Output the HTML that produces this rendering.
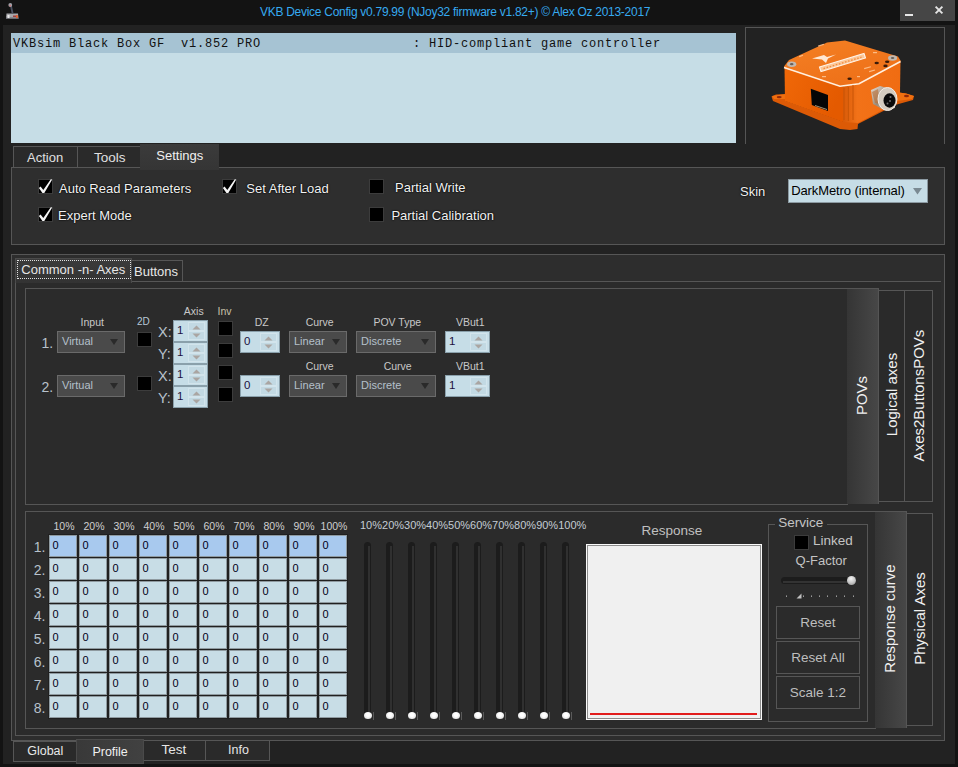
<!DOCTYPE html>
<html><head><meta charset="utf-8">
<style>
*{box-sizing:border-box}
html,body{margin:0;padding:0}
body{width:958px;height:767px;background:#131313;position:relative;overflow:hidden;font-family:"Liberation Sans",sans-serif;color:#e6e6e6}
.a{position:absolute}
.t{position:absolute;white-space:pre;line-height:1}
</style></head><body>

<div class="a" style="left:0px;top:0px;width:958px;height:25px;background:#131313"></div>
<div class="t" style="left:260.00px;top:5.64px;font-size:12px;color:#36aaf0;letter-spacing:-0.28px;">VKB Device Config v0.79.99 (NJoy32 firmware v1.82+) © Alex Oz 2013-2017</div>
<div class="a" style="left:900px;top:0px;width:55px;height:21px;background:#464646"></div>
<div class="a" style="left:905px;top:14px;width:8px;height:2px;background:#e8e8e8"></div>
<svg class="a" style="left:933px;top:4px" width="12" height="12" viewBox="0 0 12 12"><path d="M2.6 2.6L9.4 9.4M9.4 2.6L2.6 9.4" stroke="#e4e4e4" stroke-width="1.9"/></svg>
<svg class="a" style="left:4px;top:2px" width="17" height="18" viewBox="0 0 17 18">
<path d="M2.5 11.5 L14 11.5 L14.5 16.5 L2 16.5 Z" fill="#a8a8ac"/><rect x="2" y="15.5" width="12.5" height="1.5" fill="#6a6a70"/>
<rect x="3.5" y="13" width="2" height="3" fill="#e8e8e8"/>
<rect x="9" y="13.5" width="3" height="1.5" fill="#a04040"/>
<rect x="12" y="13" width="1.8" height="3" fill="#e06030"/>
<path d="M6.8 3 L8.6 11.5" stroke="#4a5060" stroke-width="1.8"/>
<circle cx="6.3" cy="3" r="1.9" fill="#a0a0a8"/>
<circle cx="6.2" cy="3.8" r="0.8" fill="#e07070"/>
</svg>
<div class="a" style="left:3px;top:25px;width:952px;height:739px;background:#222222"></div>
<div class="a" style="left:11px;top:33px;width:725px;height:110px;background:#c6dde6"></div>
<div class="a" style="left:11px;top:33px;width:725px;height:20px;background:#a6c3d3"></div>
<div class="t" style="left:13.00px;top:37.70px;font-size:12px;color:#111;font-family:'Liberation Mono',monospace;letter-spacing:0.8px;">VKBsim Black Box GF  v1.852 PRO                   : HID-compliant game controller</div>
<div class="a" style="left:745px;top:27px;width:200px;height:117px;border:1px solid #555;border-bottom:none"></div>
<svg class="a" style="left:765px;top:35px;filter:blur(0.35px)" width="160" height="100" viewBox="765 35 160 100">
<defs>
<linearGradient id="gtop" x1="0" y1="0" x2="0.6" y2="1"><stop offset="0" stop-color="#f48024"/><stop offset="1" stop-color="#ee7018"/></linearGradient>
<linearGradient id="gleft" x1="0" y1="0" x2="1" y2="0.4"><stop offset="0" stop-color="#f06808"/><stop offset="1" stop-color="#e45a00"/></linearGradient>
<linearGradient id="gright" x1="0" y1="0" x2="1" y2="0"><stop offset="0" stop-color="#d85a08"/><stop offset="0.25" stop-color="#f27218"/><stop offset="1" stop-color="#f06c12"/></linearGradient>
<linearGradient id="gcyl" x1="0" y1="0" x2="1" y2="1"><stop offset="0" stop-color="#e8e0d8"/><stop offset="0.5" stop-color="#9a8a78"/><stop offset="1" stop-color="#d8d0c8"/></linearGradient>
</defs>
<path d="M771.5 96.5 L776 94.5 L786 94 L786 101 L843 121.5 L893 104 L899 92.5 L906 93.5 L914 96 L913 100 L895 105 L858 124 L857.5 129 L850 130 L840 129 L773 101 Z" fill="#dc5a06"/>
<path d="M772 96 L786 94 L786 99 L774 99 Z" fill="#f07010"/>
<path d="M899 92.5 L906 93.5 L914 96 L912 99 L897 101 Z" fill="#f07010"/>
<path d="M784.5 67 L843 86.5 L843 122 L785 101 Z" fill="url(#gleft)"/>
<path d="M843 86.5 L900.5 61 L900 92.5 L894 104 L858 123 L843 122 Z" fill="url(#gright)"/>
<path d="M784 66.5 L789 60 L827 42.5 L845 40.5 L898 56.5 L900.5 60.5 L900.5 62 L859 83.5 L843 86.5 L840 86 L785 68.5 Z" fill="url(#gtop)"/>
<path d="M784 67.5 L840 86.2 L859 83.7 L900.5 61.5" fill="none" stroke="#fff0e0" stroke-width="1.6"/>
<ellipse cx="791.7" cy="64.2" rx="4.6" ry="2.7" fill="#c0b8b0"/><ellipse cx="791.7" cy="64.2" rx="1.8" ry="1.1" fill="#6a6058"/>
<ellipse cx="892.6" cy="58" rx="4.6" ry="2.7" fill="#c0b8b0"/><ellipse cx="892.6" cy="58" rx="1.8" ry="1.1" fill="#6a6058"/>
<g fill="#3a1a08"><ellipse cx="876.7" cy="63" rx="2.2" ry="1.3"/><ellipse cx="887.2" cy="61.7" rx="2.2" ry="1.3"/><ellipse cx="885.5" cy="65.9" rx="2.2" ry="1.3"/><ellipse cx="849.6" cy="78.8" rx="2.2" ry="1.3"/></g>
<path d="M819.5 67 L864 53.5 L865.5 58 L821 71.5 Z" fill="#fcc898" stroke="#fff4ea" stroke-width="1.1"/>
<path d="M823.5 68.6 L861.5 57.2" stroke="#f28a40" stroke-width="1.3" stroke-dasharray="1.6 1.6"/>
<path d="M812 58.5 L822 59.5 L826 63 L828 58.5 L836 54.5 L827 57 L824 55 Z" fill="#ffe8d4"/>
<g fill="#ffc898" opacity="0.85"><rect x="818" y="45.5" width="6" height="1.2" transform="rotate(-18 818 45.5)"/><rect x="799" y="56" width="4" height="1.2" transform="rotate(-20 799 56)"/><rect x="873" y="52" width="4" height="1.2"/><rect x="864" y="68" width="7" height="1.2" transform="rotate(-15 864 68)"/><rect x="869" y="71" width="6" height="1.2" transform="rotate(-15 869 71)"/><rect x="822" y="76" width="4" height="1.2"/><rect x="857" y="76" width="3" height="1.2"/></g>
<path d="M810.8 88.8 L828 95 L828 111 L811.8 105 Z" fill="#060606"/>
<path d="M815 105.5 L827 109.5" stroke="#a09478" stroke-width="1"/>
<g stroke="#c85406" stroke-width="1"><path d="M844 88 V120"/><path d="M848.3 87 V121"/><path d="M853 85 V120"/></g>
<ellipse cx="779.2" cy="97.1" rx="2.5" ry="1.2" fill="#902808"/><ellipse cx="906.5" cy="96" rx="2.5" ry="1.2" fill="#902808"/>
<path d="M871 90 L880 86 L891 89 L895 108 L884 110 L873 104 Z" fill="url(#gcyl)"/>
<path d="M872 92 L878 89 L880 104 L875 103 Z" fill="#b86a30" opacity="0.6"/>
<ellipse cx="887.5" cy="99" rx="9.5" ry="11.5" fill="#d4ccc0"/>
<ellipse cx="887.5" cy="99" rx="9.5" ry="11.5" fill="none" stroke="#f4ece4" stroke-width="1"/>
<ellipse cx="889.5" cy="100.5" rx="6" ry="7.2" fill="#0a0a0a"/>
<g fill="#707070"><circle cx="890.5" cy="97" r="1"/><circle cx="890" cy="101" r="1"/><circle cx="887.5" cy="103.5" r="1"/></g>
</svg>
<div class="a" style="left:13px;top:146px;width:65px;height:22px;border:1px solid #565656;background:#2a2a2a"></div>
<div class="t" style="left:27.00px;top:151.00px;font-size:13px;color:#e0e0e0;">Action</div>
<div class="a" style="left:77px;top:146px;width:64px;height:22px;border:1px solid #565656;background:#2a2a2a"></div>
<div class="t" style="left:94.00px;top:150.57px;font-size:13.5px;color:#e0e0e0;">Tools</div>
<div class="a" style="left:11px;top:167px;width:934px;height:78px;border:1px solid #565656;background:#2e2e2e"></div>
<div class="a" style="left:140px;top:144px;width:79px;height:26px;background:linear-gradient(#3b3b3b,#353535)"></div>
<div class="t" style="left:156.30px;top:149.00px;font-size:13px;color:#f0f0f0;">Settings</div>
<div class="a" style="left:38px;top:179px;width:15px;height:15px;background:#000;border:1px solid #3c3c3c"></div>
<svg class="a" style="left:38px;top:179px" width="16" height="16" viewBox="0 0 16 16"><path d="M0.9 8.9 L2.6 7.6 L5.3 10.9 L12.8 0.2 L14.2 0.5 L6.3 13.9 L4.4 13.9 Z" fill="#f4f4f4"/></svg>
<div class="t" style="left:59.00px;top:181.50px;font-size:13px;color:#f2f2f2;text-shadow:0 0 2px #000,0 0 1px #000;">Auto Read Parameters</div>
<div class="a" style="left:38px;top:207px;width:15px;height:15px;background:#000;border:1px solid #3c3c3c"></div>
<svg class="a" style="left:38px;top:207px" width="16" height="16" viewBox="0 0 16 16"><path d="M0.9 8.9 L2.6 7.6 L5.3 10.9 L12.8 0.2 L14.2 0.5 L6.3 13.9 L4.4 13.9 Z" fill="#f4f4f4"/></svg>
<div class="t" style="left:58.00px;top:209.00px;font-size:13px;color:#f2f2f2;text-shadow:0 0 2px #000,0 0 1px #000;">Expert Mode</div>
<div class="a" style="left:222px;top:179px;width:15px;height:15px;background:#000;border:1px solid #3c3c3c"></div>
<svg class="a" style="left:222px;top:179px" width="16" height="16" viewBox="0 0 16 16"><path d="M0.9 8.9 L2.6 7.6 L5.3 10.9 L12.8 0.2 L14.2 0.5 L6.3 13.9 L4.4 13.9 Z" fill="#f4f4f4"/></svg>
<div class="t" style="left:246.30px;top:182.00px;font-size:13px;color:#f2f2f2;text-shadow:0 0 2px #000,0 0 1px #000;">Set After Load</div>
<div class="a" style="left:369px;top:179px;width:15px;height:15px;background:#000;border:1px solid #3c3c3c"></div>
<div class="t" style="left:395.00px;top:181.00px;font-size:13px;color:#f2f2f2;text-shadow:0 0 2px #000,0 0 1px #000;">Partial Write</div>
<div class="a" style="left:369px;top:207px;width:15px;height:15px;background:#000;border:1px solid #3c3c3c"></div>
<div class="t" style="left:391.40px;top:208.70px;font-size:13px;color:#f2f2f2;text-shadow:0 0 2px #000,0 0 1px #000;">Partial Calibration</div>
<div class="t" style="left:740.00px;top:185.00px;font-size:13px;color:#f2f2f2;text-shadow:0 0 2px #000,0 0 1px #000;">Skin</div>
<div class="a" style="left:788px;top:179px;width:140px;height:24px;background:#c6dde6;border:1px solid #8c9aa2"></div>
<div class="t" style="left:791.20px;top:184.00px;font-size:13px;color:#000;letter-spacing:-0.1px;">DarkMetro (internal)</div>
<svg class="a" style="left:912px;top:187px" width="11" height="9"><path d="M1 1L10 1L5.5 7.5Z" fill="#7a8a92"/></svg>
<div class="a" style="left:11px;top:254px;width:934px;height:487px;border:1px solid #565656;background:#2d2d2d"></div>
<div class="a" style="left:15px;top:281px;width:926px;height:455px;border-left:1px solid #565656;border-top:1px solid #565656;border-bottom:1px solid #565656;background:#2b2b2b"></div>
<div class="a" style="left:131px;top:260px;width:52px;height:22px;border:1px solid #565656;background:#2b2b2b"></div>
<div class="t" style="left:134.00px;top:264.60px;font-size:13px;">Buttons</div>
<div class="a" style="left:15px;top:258px;width:117px;height:25px;background:linear-gradient(#3b3b3b,#333333);border:1px solid #4a4a4a;border-bottom:none"></div>
<div class="a" style="left:17px;top:260px;width:114px;height:19px;border:1px dotted #e0e0e0"></div>
<div class="t" style="left:21.30px;top:262.90px;font-size:13px;">Common -n- Axes</div>
<div class="a" style="left:25px;top:288px;width:823px;height:217px;border:1px solid #565656;background:#2b2b2b"></div>
<div class="a" style="left:904px;top:290px;width:29px;height:212px;border:1px solid #565656;background:#2a2a2a"></div>
<div class="a" style="left:878px;top:290px;width:27px;height:212px;border:1px solid #565656;background:#2a2a2a"></div>
<div class="a" style="left:847px;top:288px;width:32px;height:216px;background:linear-gradient(90deg,#353535,#474747);border-right:1px solid #555;border-top:1px solid #555"></div>
<div class="t" style="left:711.30px;top:387.90px;width:300px;text-align:center;font-size:15px;color:#f0f0f0;transform:rotate(-90deg)">POVs</div>
<div class="t" style="left:740.60px;top:386.50px;width:300px;text-align:center;font-size:15px;color:#f0f0f0;transform:rotate(-90deg)">Logical axes</div>
<div class="t" style="left:767.80px;top:388.30px;width:300px;text-align:center;font-size:15px;color:#f0f0f0;transform:rotate(-90deg)">Axes2ButtonsPOVs</div>
<div class="t" style="left:41.50px;top:335.90px;font-size:14px;color:#b8c2cc;">1.</div>
<div class="a" style="left:57px;top:331px;width:68px;height:22px;background:#4a4a4a;border:1px solid #6a6a6a"></div>
<div class="t" style="left:62.00px;top:335.69px;font-size:11px;color:#b5c0ca;">Virtual</div>
<div class="a" style="left:110px;top:339px;width:0;height:0;border-left:4px solid transparent;border-right:4px solid transparent;border-top:6px solid #2a2a2a"></div>
<div class="a" style="left:137px;top:332px;width:15px;height:15px;background:#000;border:1px solid #3c3c3c"></div>
<div class="a" style="left:240px;top:331px;width:40px;height:22px;background:#c6dde7;border:1px solid #8aa0ab"></div>
<div class="a" style="left:260px;top:333px;width:17px;height:9px;background:#c2d9e3;border:1px solid #d2e4ec"></div>
<div class="a" style="left:260px;top:342px;width:17px;height:9px;background:#c2d9e3;border:1px solid #d2e4ec"></div>
<svg class="a" style="left:264px;top:336px" width="9" height="14"><path d="M0.5 4.5L4.5 0.5L8.5 4.5Z M0.5 8.5L8.5 8.5L4.5 12.5Z" fill="#aaa5a2"/></svg>
<div class="t" style="left:244.00px;top:336.27px;font-size:11.5px;color:#201040;">0</div>
<div class="a" style="left:289px;top:331px;width:58px;height:22px;background:#4a4a4a;border:1px solid #6a6a6a"></div>
<div class="t" style="left:294.00px;top:335.69px;font-size:11px;color:#b5c0ca;">Linear</div>
<div class="a" style="left:332px;top:339px;width:0;height:0;border-left:4px solid transparent;border-right:4px solid transparent;border-top:6px solid #2a2a2a"></div>
<div class="a" style="left:356px;top:331px;width:80px;height:22px;background:#4a4a4a;border:1px solid #6a6a6a"></div>
<div class="t" style="left:361.00px;top:335.69px;font-size:11px;color:#b5c0ca;">Discrete</div>
<div class="a" style="left:421px;top:339px;width:0;height:0;border-left:4px solid transparent;border-right:4px solid transparent;border-top:6px solid #2a2a2a"></div>
<div class="a" style="left:445px;top:331px;width:45px;height:22px;background:#c6dde7;border:1px solid #8aa0ab"></div>
<div class="a" style="left:470px;top:333px;width:17px;height:9px;background:#c2d9e3;border:1px solid #d2e4ec"></div>
<div class="a" style="left:470px;top:342px;width:17px;height:9px;background:#c2d9e3;border:1px solid #d2e4ec"></div>
<svg class="a" style="left:474px;top:336px" width="9" height="14"><path d="M0.5 4.5L4.5 0.5L8.5 4.5Z M0.5 8.5L8.5 8.5L4.5 12.5Z" fill="#aaa5a2"/></svg>
<div class="t" style="left:449.00px;top:336.27px;font-size:11.5px;color:#201040;">1</div>
<div class="t" style="left:41.50px;top:379.90px;font-size:14px;color:#b8c2cc;">2.</div>
<div class="a" style="left:57px;top:375px;width:68px;height:22px;background:#4a4a4a;border:1px solid #6a6a6a"></div>
<div class="t" style="left:62.00px;top:379.69px;font-size:11px;color:#b5c0ca;">Virtual</div>
<div class="a" style="left:110px;top:383px;width:0;height:0;border-left:4px solid transparent;border-right:4px solid transparent;border-top:6px solid #2a2a2a"></div>
<div class="a" style="left:137px;top:376px;width:15px;height:15px;background:#000;border:1px solid #3c3c3c"></div>
<div class="a" style="left:240px;top:375px;width:40px;height:22px;background:#c6dde7;border:1px solid #8aa0ab"></div>
<div class="a" style="left:260px;top:377px;width:17px;height:9px;background:#c2d9e3;border:1px solid #d2e4ec"></div>
<div class="a" style="left:260px;top:386px;width:17px;height:9px;background:#c2d9e3;border:1px solid #d2e4ec"></div>
<svg class="a" style="left:264px;top:380px" width="9" height="14"><path d="M0.5 4.5L4.5 0.5L8.5 4.5Z M0.5 8.5L8.5 8.5L4.5 12.5Z" fill="#aaa5a2"/></svg>
<div class="t" style="left:244.00px;top:380.27px;font-size:11.5px;color:#201040;">0</div>
<div class="a" style="left:289px;top:375px;width:58px;height:22px;background:#4a4a4a;border:1px solid #6a6a6a"></div>
<div class="t" style="left:294.00px;top:379.69px;font-size:11px;color:#b5c0ca;">Linear</div>
<div class="a" style="left:332px;top:383px;width:0;height:0;border-left:4px solid transparent;border-right:4px solid transparent;border-top:6px solid #2a2a2a"></div>
<div class="a" style="left:356px;top:375px;width:80px;height:22px;background:#4a4a4a;border:1px solid #6a6a6a"></div>
<div class="t" style="left:361.00px;top:379.69px;font-size:11px;color:#b5c0ca;">Discrete</div>
<div class="a" style="left:421px;top:383px;width:0;height:0;border-left:4px solid transparent;border-right:4px solid transparent;border-top:6px solid #2a2a2a"></div>
<div class="a" style="left:445px;top:375px;width:45px;height:22px;background:#c6dde7;border:1px solid #8aa0ab"></div>
<div class="a" style="left:470px;top:377px;width:17px;height:9px;background:#c2d9e3;border:1px solid #d2e4ec"></div>
<div class="a" style="left:470px;top:386px;width:17px;height:9px;background:#c2d9e3;border:1px solid #d2e4ec"></div>
<svg class="a" style="left:474px;top:380px" width="9" height="14"><path d="M0.5 4.5L4.5 0.5L8.5 4.5Z M0.5 8.5L8.5 8.5L4.5 12.5Z" fill="#aaa5a2"/></svg>
<div class="t" style="left:449.00px;top:380.27px;font-size:11.5px;color:#201040;">1</div>
<div class="t" style="left:80.60px;top:316.71px;font-size:10.5px;color:#c8c8c8;">Input</div>
<div class="t" style="left:137.00px;top:317.34px;font-size:10px;color:#b8c8d8;">2D</div>
<div class="t" style="left:183.80px;top:305.91px;font-size:10.5px;color:#c8c8c8;">Axis</div>
<div class="t" style="left:217.50px;top:305.91px;font-size:10.5px;color:#c8c0a8;">Inv</div>
<div class="t" style="left:254.70px;top:317.11px;font-size:10.5px;color:#c8c8c8;">DZ</div>
<div class="t" style="left:305.70px;top:317.11px;font-size:10.5px;color:#c8c8c8;">Curve</div>
<div class="t" style="left:373.40px;top:317.01px;font-size:10.5px;color:#c8c8c8;">POV Type</div>
<div class="t" style="left:456.00px;top:317.11px;font-size:10.5px;color:#c8c8c8;">VBut1</div>
<div class="t" style="left:305.70px;top:360.91px;font-size:10.5px;color:#c8c8c8;">Curve</div>
<div class="t" style="left:383.70px;top:360.91px;font-size:10.5px;color:#c8c8c8;">Curve</div>
<div class="t" style="left:456.00px;top:360.91px;font-size:10.5px;color:#c8c8c8;">VBut1</div>
<div class="a" style="left:173px;top:320px;width:35px;height:22px;background:#c6dde7;border:1px solid #8aa0ab"></div>
<div class="a" style="left:188px;top:322px;width:17px;height:9px;background:#c2d9e3;border:1px solid #d2e4ec"></div>
<div class="a" style="left:188px;top:331px;width:17px;height:9px;background:#c2d9e3;border:1px solid #d2e4ec"></div>
<svg class="a" style="left:192px;top:325px" width="9" height="14"><path d="M0.5 4.5L4.5 0.5L8.5 4.5Z M0.5 8.5L8.5 8.5L4.5 12.5Z" fill="#aaa5a2"/></svg>
<div class="t" style="left:177.00px;top:325.27px;font-size:11.5px;color:#201040;">1</div>
<div class="t" style="left:158.00px;top:324.73px;font-size:14.5px;color:#b8c2cc;">X:</div>
<div class="a" style="left:173px;top:342px;width:35px;height:22px;background:#c6dde7;border:1px solid #8aa0ab"></div>
<div class="a" style="left:188px;top:344px;width:17px;height:9px;background:#c2d9e3;border:1px solid #d2e4ec"></div>
<div class="a" style="left:188px;top:353px;width:17px;height:9px;background:#c2d9e3;border:1px solid #d2e4ec"></div>
<svg class="a" style="left:192px;top:347px" width="9" height="14"><path d="M0.5 4.5L4.5 0.5L8.5 4.5Z M0.5 8.5L8.5 8.5L4.5 12.5Z" fill="#aaa5a2"/></svg>
<div class="t" style="left:177.00px;top:347.27px;font-size:11.5px;color:#201040;">1</div>
<div class="t" style="left:158.00px;top:346.73px;font-size:14.5px;color:#b8c2cc;">Y:</div>
<div class="a" style="left:173px;top:364px;width:35px;height:22px;background:#c6dde7;border:1px solid #8aa0ab"></div>
<div class="a" style="left:188px;top:366px;width:17px;height:9px;background:#c2d9e3;border:1px solid #d2e4ec"></div>
<div class="a" style="left:188px;top:375px;width:17px;height:9px;background:#c2d9e3;border:1px solid #d2e4ec"></div>
<svg class="a" style="left:192px;top:369px" width="9" height="14"><path d="M0.5 4.5L4.5 0.5L8.5 4.5Z M0.5 8.5L8.5 8.5L4.5 12.5Z" fill="#aaa5a2"/></svg>
<div class="t" style="left:177.00px;top:369.27px;font-size:11.5px;color:#201040;">1</div>
<div class="t" style="left:158.00px;top:368.73px;font-size:14.5px;color:#b8c2cc;">X:</div>
<div class="a" style="left:173px;top:386px;width:35px;height:22px;background:#c6dde7;border:1px solid #8aa0ab"></div>
<div class="a" style="left:188px;top:388px;width:17px;height:9px;background:#c2d9e3;border:1px solid #d2e4ec"></div>
<div class="a" style="left:188px;top:397px;width:17px;height:9px;background:#c2d9e3;border:1px solid #d2e4ec"></div>
<svg class="a" style="left:192px;top:391px" width="9" height="14"><path d="M0.5 4.5L4.5 0.5L8.5 4.5Z M0.5 8.5L8.5 8.5L4.5 12.5Z" fill="#aaa5a2"/></svg>
<div class="t" style="left:177.00px;top:391.27px;font-size:11.5px;color:#201040;">1</div>
<div class="t" style="left:158.00px;top:390.73px;font-size:14.5px;color:#b8c2cc;">Y:</div>
<div class="a" style="left:218px;top:321px;width:15px;height:15px;background:#000;border:1px solid #3c3c3c"></div>
<div class="a" style="left:218px;top:343px;width:15px;height:15px;background:#000;border:1px solid #3c3c3c"></div>
<div class="a" style="left:218px;top:365px;width:15px;height:15px;background:#000;border:1px solid #3c3c3c"></div>
<div class="a" style="left:218px;top:387px;width:15px;height:15px;background:#000;border:1px solid #3c3c3c"></div>
<div class="a" style="left:25px;top:511px;width:851px;height:218px;border:1px solid #565656;background:#2b2b2b"></div>
<div class="a" style="left:906px;top:513px;width:27px;height:213px;border:1px solid #565656;background:#2a2a2a"></div>
<div class="a" style="left:875px;top:511px;width:32px;height:217px;background:linear-gradient(90deg,#353535,#474747);border-right:1px solid #555;border-top:1px solid #555"></div>
<div class="t" style="left:738.70px;top:611.00px;width:300px;text-align:center;font-size:15px;color:#f0f0f0;transform:rotate(-90deg)">Response curve</div>
<div class="t" style="left:768.50px;top:610.80px;width:300px;text-align:center;font-size:15px;color:#f0f0f0;transform:rotate(-90deg)">Physical Axes</div>
<div class="a" style="left:48px;top:534px;width:300px;height:185px;background:#202020"></div>
<div class="t" style="left:-36.00px;width:200px;text-align:center;top:520.86px;font-size:10.5px;color:#cfcfcf;">10%</div>
<div class="t" style="left:-6.00px;width:200px;text-align:center;top:520.86px;font-size:10.5px;color:#cfcfcf;">20%</div>
<div class="t" style="left:24.00px;width:200px;text-align:center;top:520.86px;font-size:10.5px;color:#cfcfcf;">30%</div>
<div class="t" style="left:54.00px;width:200px;text-align:center;top:520.86px;font-size:10.5px;color:#cfcfcf;">40%</div>
<div class="t" style="left:84.00px;width:200px;text-align:center;top:520.86px;font-size:10.5px;color:#cfcfcf;">50%</div>
<div class="t" style="left:114.00px;width:200px;text-align:center;top:520.86px;font-size:10.5px;color:#cfcfcf;">60%</div>
<div class="t" style="left:144.00px;width:200px;text-align:center;top:520.86px;font-size:10.5px;color:#cfcfcf;">70%</div>
<div class="t" style="left:174.00px;width:200px;text-align:center;top:520.86px;font-size:10.5px;color:#cfcfcf;">80%</div>
<div class="t" style="left:204.00px;width:200px;text-align:center;top:520.86px;font-size:10.5px;color:#cfcfcf;">90%</div>
<div class="t" style="left:234.00px;width:200px;text-align:center;top:520.86px;font-size:10.5px;color:#cfcfcf;">100%</div>
<div class="t" style="left:33.80px;top:540.15px;font-size:14px;color:#b8c2cc;">1.</div>
<div class="a" style="left:49px;top:535px;width:28px;height:22px;background:#a8c9ee;border:1px solid #8f9aa0"></div>
<div class="t" style="left:52.50px;top:539.69px;font-size:11px;color:#000018;">0</div>
<div class="a" style="left:79px;top:535px;width:28px;height:22px;background:#a8c9ee;border:1px solid #8f9aa0"></div>
<div class="t" style="left:82.50px;top:539.69px;font-size:11px;color:#000018;">0</div>
<div class="a" style="left:109px;top:535px;width:28px;height:22px;background:#a8c9ee;border:1px solid #8f9aa0"></div>
<div class="t" style="left:112.50px;top:539.69px;font-size:11px;color:#000018;">0</div>
<div class="a" style="left:139px;top:535px;width:28px;height:22px;background:#a8c9ee;border:1px solid #8f9aa0"></div>
<div class="t" style="left:142.50px;top:539.69px;font-size:11px;color:#000018;">0</div>
<div class="a" style="left:169px;top:535px;width:28px;height:22px;background:#a8c9ee;border:1px solid #8f9aa0"></div>
<div class="t" style="left:172.50px;top:539.69px;font-size:11px;color:#000018;">0</div>
<div class="a" style="left:199px;top:535px;width:28px;height:22px;background:#a8c9ee;border:1px solid #8f9aa0"></div>
<div class="t" style="left:202.50px;top:539.69px;font-size:11px;color:#000018;">0</div>
<div class="a" style="left:229px;top:535px;width:28px;height:22px;background:#a8c9ee;border:1px solid #8f9aa0"></div>
<div class="t" style="left:232.50px;top:539.69px;font-size:11px;color:#000018;">0</div>
<div class="a" style="left:259px;top:535px;width:28px;height:22px;background:#a8c9ee;border:1px solid #8f9aa0"></div>
<div class="t" style="left:262.50px;top:539.69px;font-size:11px;color:#000018;">0</div>
<div class="a" style="left:289px;top:535px;width:28px;height:22px;background:#a8c9ee;border:1px solid #8f9aa0"></div>
<div class="t" style="left:292.50px;top:539.69px;font-size:11px;color:#000018;">0</div>
<div class="a" style="left:319px;top:535px;width:28px;height:22px;background:#a8c9ee;border:1px solid #8f9aa0"></div>
<div class="t" style="left:322.50px;top:539.69px;font-size:11px;color:#000018;">0</div>
<div class="t" style="left:33.80px;top:563.15px;font-size:14px;color:#b8c2cc;">2.</div>
<div class="a" style="left:49px;top:558px;width:28px;height:22px;background:#c8dde6;border:1px solid #8f9aa0"></div>
<div class="t" style="left:52.50px;top:562.69px;font-size:11px;color:#000018;">0</div>
<div class="a" style="left:79px;top:558px;width:28px;height:22px;background:#c8dde6;border:1px solid #8f9aa0"></div>
<div class="t" style="left:82.50px;top:562.69px;font-size:11px;color:#000018;">0</div>
<div class="a" style="left:109px;top:558px;width:28px;height:22px;background:#c8dde6;border:1px solid #8f9aa0"></div>
<div class="t" style="left:112.50px;top:562.69px;font-size:11px;color:#000018;">0</div>
<div class="a" style="left:139px;top:558px;width:28px;height:22px;background:#c8dde6;border:1px solid #8f9aa0"></div>
<div class="t" style="left:142.50px;top:562.69px;font-size:11px;color:#000018;">0</div>
<div class="a" style="left:169px;top:558px;width:28px;height:22px;background:#c8dde6;border:1px solid #8f9aa0"></div>
<div class="t" style="left:172.50px;top:562.69px;font-size:11px;color:#000018;">0</div>
<div class="a" style="left:199px;top:558px;width:28px;height:22px;background:#c8dde6;border:1px solid #8f9aa0"></div>
<div class="t" style="left:202.50px;top:562.69px;font-size:11px;color:#000018;">0</div>
<div class="a" style="left:229px;top:558px;width:28px;height:22px;background:#c8dde6;border:1px solid #8f9aa0"></div>
<div class="t" style="left:232.50px;top:562.69px;font-size:11px;color:#000018;">0</div>
<div class="a" style="left:259px;top:558px;width:28px;height:22px;background:#c8dde6;border:1px solid #8f9aa0"></div>
<div class="t" style="left:262.50px;top:562.69px;font-size:11px;color:#000018;">0</div>
<div class="a" style="left:289px;top:558px;width:28px;height:22px;background:#c8dde6;border:1px solid #8f9aa0"></div>
<div class="t" style="left:292.50px;top:562.69px;font-size:11px;color:#000018;">0</div>
<div class="a" style="left:319px;top:558px;width:28px;height:22px;background:#c8dde6;border:1px solid #8f9aa0"></div>
<div class="t" style="left:322.50px;top:562.69px;font-size:11px;color:#000018;">0</div>
<div class="t" style="left:33.80px;top:586.15px;font-size:14px;color:#b8c2cc;">3.</div>
<div class="a" style="left:49px;top:581px;width:28px;height:22px;background:#c8dde6;border:1px solid #8f9aa0"></div>
<div class="t" style="left:52.50px;top:585.69px;font-size:11px;color:#000018;">0</div>
<div class="a" style="left:79px;top:581px;width:28px;height:22px;background:#c8dde6;border:1px solid #8f9aa0"></div>
<div class="t" style="left:82.50px;top:585.69px;font-size:11px;color:#000018;">0</div>
<div class="a" style="left:109px;top:581px;width:28px;height:22px;background:#c8dde6;border:1px solid #8f9aa0"></div>
<div class="t" style="left:112.50px;top:585.69px;font-size:11px;color:#000018;">0</div>
<div class="a" style="left:139px;top:581px;width:28px;height:22px;background:#c8dde6;border:1px solid #8f9aa0"></div>
<div class="t" style="left:142.50px;top:585.69px;font-size:11px;color:#000018;">0</div>
<div class="a" style="left:169px;top:581px;width:28px;height:22px;background:#c8dde6;border:1px solid #8f9aa0"></div>
<div class="t" style="left:172.50px;top:585.69px;font-size:11px;color:#000018;">0</div>
<div class="a" style="left:199px;top:581px;width:28px;height:22px;background:#c8dde6;border:1px solid #8f9aa0"></div>
<div class="t" style="left:202.50px;top:585.69px;font-size:11px;color:#000018;">0</div>
<div class="a" style="left:229px;top:581px;width:28px;height:22px;background:#c8dde6;border:1px solid #8f9aa0"></div>
<div class="t" style="left:232.50px;top:585.69px;font-size:11px;color:#000018;">0</div>
<div class="a" style="left:259px;top:581px;width:28px;height:22px;background:#c8dde6;border:1px solid #8f9aa0"></div>
<div class="t" style="left:262.50px;top:585.69px;font-size:11px;color:#000018;">0</div>
<div class="a" style="left:289px;top:581px;width:28px;height:22px;background:#c8dde6;border:1px solid #8f9aa0"></div>
<div class="t" style="left:292.50px;top:585.69px;font-size:11px;color:#000018;">0</div>
<div class="a" style="left:319px;top:581px;width:28px;height:22px;background:#c8dde6;border:1px solid #8f9aa0"></div>
<div class="t" style="left:322.50px;top:585.69px;font-size:11px;color:#000018;">0</div>
<div class="t" style="left:33.80px;top:609.15px;font-size:14px;color:#b8c2cc;">4.</div>
<div class="a" style="left:49px;top:604px;width:28px;height:22px;background:#c8dde6;border:1px solid #8f9aa0"></div>
<div class="t" style="left:52.50px;top:608.69px;font-size:11px;color:#000018;">0</div>
<div class="a" style="left:79px;top:604px;width:28px;height:22px;background:#c8dde6;border:1px solid #8f9aa0"></div>
<div class="t" style="left:82.50px;top:608.69px;font-size:11px;color:#000018;">0</div>
<div class="a" style="left:109px;top:604px;width:28px;height:22px;background:#c8dde6;border:1px solid #8f9aa0"></div>
<div class="t" style="left:112.50px;top:608.69px;font-size:11px;color:#000018;">0</div>
<div class="a" style="left:139px;top:604px;width:28px;height:22px;background:#c8dde6;border:1px solid #8f9aa0"></div>
<div class="t" style="left:142.50px;top:608.69px;font-size:11px;color:#000018;">0</div>
<div class="a" style="left:169px;top:604px;width:28px;height:22px;background:#c8dde6;border:1px solid #8f9aa0"></div>
<div class="t" style="left:172.50px;top:608.69px;font-size:11px;color:#000018;">0</div>
<div class="a" style="left:199px;top:604px;width:28px;height:22px;background:#c8dde6;border:1px solid #8f9aa0"></div>
<div class="t" style="left:202.50px;top:608.69px;font-size:11px;color:#000018;">0</div>
<div class="a" style="left:229px;top:604px;width:28px;height:22px;background:#c8dde6;border:1px solid #8f9aa0"></div>
<div class="t" style="left:232.50px;top:608.69px;font-size:11px;color:#000018;">0</div>
<div class="a" style="left:259px;top:604px;width:28px;height:22px;background:#c8dde6;border:1px solid #8f9aa0"></div>
<div class="t" style="left:262.50px;top:608.69px;font-size:11px;color:#000018;">0</div>
<div class="a" style="left:289px;top:604px;width:28px;height:22px;background:#c8dde6;border:1px solid #8f9aa0"></div>
<div class="t" style="left:292.50px;top:608.69px;font-size:11px;color:#000018;">0</div>
<div class="a" style="left:319px;top:604px;width:28px;height:22px;background:#c8dde6;border:1px solid #8f9aa0"></div>
<div class="t" style="left:322.50px;top:608.69px;font-size:11px;color:#000018;">0</div>
<div class="t" style="left:33.80px;top:632.15px;font-size:14px;color:#b8c2cc;">5.</div>
<div class="a" style="left:49px;top:627px;width:28px;height:22px;background:#c8dde6;border:1px solid #8f9aa0"></div>
<div class="t" style="left:52.50px;top:631.69px;font-size:11px;color:#000018;">0</div>
<div class="a" style="left:79px;top:627px;width:28px;height:22px;background:#c8dde6;border:1px solid #8f9aa0"></div>
<div class="t" style="left:82.50px;top:631.69px;font-size:11px;color:#000018;">0</div>
<div class="a" style="left:109px;top:627px;width:28px;height:22px;background:#c8dde6;border:1px solid #8f9aa0"></div>
<div class="t" style="left:112.50px;top:631.69px;font-size:11px;color:#000018;">0</div>
<div class="a" style="left:139px;top:627px;width:28px;height:22px;background:#c8dde6;border:1px solid #8f9aa0"></div>
<div class="t" style="left:142.50px;top:631.69px;font-size:11px;color:#000018;">0</div>
<div class="a" style="left:169px;top:627px;width:28px;height:22px;background:#c8dde6;border:1px solid #8f9aa0"></div>
<div class="t" style="left:172.50px;top:631.69px;font-size:11px;color:#000018;">0</div>
<div class="a" style="left:199px;top:627px;width:28px;height:22px;background:#c8dde6;border:1px solid #8f9aa0"></div>
<div class="t" style="left:202.50px;top:631.69px;font-size:11px;color:#000018;">0</div>
<div class="a" style="left:229px;top:627px;width:28px;height:22px;background:#c8dde6;border:1px solid #8f9aa0"></div>
<div class="t" style="left:232.50px;top:631.69px;font-size:11px;color:#000018;">0</div>
<div class="a" style="left:259px;top:627px;width:28px;height:22px;background:#c8dde6;border:1px solid #8f9aa0"></div>
<div class="t" style="left:262.50px;top:631.69px;font-size:11px;color:#000018;">0</div>
<div class="a" style="left:289px;top:627px;width:28px;height:22px;background:#c8dde6;border:1px solid #8f9aa0"></div>
<div class="t" style="left:292.50px;top:631.69px;font-size:11px;color:#000018;">0</div>
<div class="a" style="left:319px;top:627px;width:28px;height:22px;background:#c8dde6;border:1px solid #8f9aa0"></div>
<div class="t" style="left:322.50px;top:631.69px;font-size:11px;color:#000018;">0</div>
<div class="t" style="left:33.80px;top:655.15px;font-size:14px;color:#b8c2cc;">6.</div>
<div class="a" style="left:49px;top:650px;width:28px;height:22px;background:#c8dde6;border:1px solid #8f9aa0"></div>
<div class="t" style="left:52.50px;top:654.69px;font-size:11px;color:#000018;">0</div>
<div class="a" style="left:79px;top:650px;width:28px;height:22px;background:#c8dde6;border:1px solid #8f9aa0"></div>
<div class="t" style="left:82.50px;top:654.69px;font-size:11px;color:#000018;">0</div>
<div class="a" style="left:109px;top:650px;width:28px;height:22px;background:#c8dde6;border:1px solid #8f9aa0"></div>
<div class="t" style="left:112.50px;top:654.69px;font-size:11px;color:#000018;">0</div>
<div class="a" style="left:139px;top:650px;width:28px;height:22px;background:#c8dde6;border:1px solid #8f9aa0"></div>
<div class="t" style="left:142.50px;top:654.69px;font-size:11px;color:#000018;">0</div>
<div class="a" style="left:169px;top:650px;width:28px;height:22px;background:#c8dde6;border:1px solid #8f9aa0"></div>
<div class="t" style="left:172.50px;top:654.69px;font-size:11px;color:#000018;">0</div>
<div class="a" style="left:199px;top:650px;width:28px;height:22px;background:#c8dde6;border:1px solid #8f9aa0"></div>
<div class="t" style="left:202.50px;top:654.69px;font-size:11px;color:#000018;">0</div>
<div class="a" style="left:229px;top:650px;width:28px;height:22px;background:#c8dde6;border:1px solid #8f9aa0"></div>
<div class="t" style="left:232.50px;top:654.69px;font-size:11px;color:#000018;">0</div>
<div class="a" style="left:259px;top:650px;width:28px;height:22px;background:#c8dde6;border:1px solid #8f9aa0"></div>
<div class="t" style="left:262.50px;top:654.69px;font-size:11px;color:#000018;">0</div>
<div class="a" style="left:289px;top:650px;width:28px;height:22px;background:#c8dde6;border:1px solid #8f9aa0"></div>
<div class="t" style="left:292.50px;top:654.69px;font-size:11px;color:#000018;">0</div>
<div class="a" style="left:319px;top:650px;width:28px;height:22px;background:#c8dde6;border:1px solid #8f9aa0"></div>
<div class="t" style="left:322.50px;top:654.69px;font-size:11px;color:#000018;">0</div>
<div class="t" style="left:33.80px;top:678.15px;font-size:14px;color:#b8c2cc;">7.</div>
<div class="a" style="left:49px;top:673px;width:28px;height:22px;background:#c8dde6;border:1px solid #8f9aa0"></div>
<div class="t" style="left:52.50px;top:677.69px;font-size:11px;color:#000018;">0</div>
<div class="a" style="left:79px;top:673px;width:28px;height:22px;background:#c8dde6;border:1px solid #8f9aa0"></div>
<div class="t" style="left:82.50px;top:677.69px;font-size:11px;color:#000018;">0</div>
<div class="a" style="left:109px;top:673px;width:28px;height:22px;background:#c8dde6;border:1px solid #8f9aa0"></div>
<div class="t" style="left:112.50px;top:677.69px;font-size:11px;color:#000018;">0</div>
<div class="a" style="left:139px;top:673px;width:28px;height:22px;background:#c8dde6;border:1px solid #8f9aa0"></div>
<div class="t" style="left:142.50px;top:677.69px;font-size:11px;color:#000018;">0</div>
<div class="a" style="left:169px;top:673px;width:28px;height:22px;background:#c8dde6;border:1px solid #8f9aa0"></div>
<div class="t" style="left:172.50px;top:677.69px;font-size:11px;color:#000018;">0</div>
<div class="a" style="left:199px;top:673px;width:28px;height:22px;background:#c8dde6;border:1px solid #8f9aa0"></div>
<div class="t" style="left:202.50px;top:677.69px;font-size:11px;color:#000018;">0</div>
<div class="a" style="left:229px;top:673px;width:28px;height:22px;background:#c8dde6;border:1px solid #8f9aa0"></div>
<div class="t" style="left:232.50px;top:677.69px;font-size:11px;color:#000018;">0</div>
<div class="a" style="left:259px;top:673px;width:28px;height:22px;background:#c8dde6;border:1px solid #8f9aa0"></div>
<div class="t" style="left:262.50px;top:677.69px;font-size:11px;color:#000018;">0</div>
<div class="a" style="left:289px;top:673px;width:28px;height:22px;background:#c8dde6;border:1px solid #8f9aa0"></div>
<div class="t" style="left:292.50px;top:677.69px;font-size:11px;color:#000018;">0</div>
<div class="a" style="left:319px;top:673px;width:28px;height:22px;background:#c8dde6;border:1px solid #8f9aa0"></div>
<div class="t" style="left:322.50px;top:677.69px;font-size:11px;color:#000018;">0</div>
<div class="t" style="left:33.80px;top:701.15px;font-size:14px;color:#b8c2cc;">8.</div>
<div class="a" style="left:49px;top:696px;width:28px;height:22px;background:#c8dde6;border:1px solid #8f9aa0"></div>
<div class="t" style="left:52.50px;top:700.69px;font-size:11px;color:#000018;">0</div>
<div class="a" style="left:79px;top:696px;width:28px;height:22px;background:#c8dde6;border:1px solid #8f9aa0"></div>
<div class="t" style="left:82.50px;top:700.69px;font-size:11px;color:#000018;">0</div>
<div class="a" style="left:109px;top:696px;width:28px;height:22px;background:#c8dde6;border:1px solid #8f9aa0"></div>
<div class="t" style="left:112.50px;top:700.69px;font-size:11px;color:#000018;">0</div>
<div class="a" style="left:139px;top:696px;width:28px;height:22px;background:#c8dde6;border:1px solid #8f9aa0"></div>
<div class="t" style="left:142.50px;top:700.69px;font-size:11px;color:#000018;">0</div>
<div class="a" style="left:169px;top:696px;width:28px;height:22px;background:#c8dde6;border:1px solid #8f9aa0"></div>
<div class="t" style="left:172.50px;top:700.69px;font-size:11px;color:#000018;">0</div>
<div class="a" style="left:199px;top:696px;width:28px;height:22px;background:#c8dde6;border:1px solid #8f9aa0"></div>
<div class="t" style="left:202.50px;top:700.69px;font-size:11px;color:#000018;">0</div>
<div class="a" style="left:229px;top:696px;width:28px;height:22px;background:#c8dde6;border:1px solid #8f9aa0"></div>
<div class="t" style="left:232.50px;top:700.69px;font-size:11px;color:#000018;">0</div>
<div class="a" style="left:259px;top:696px;width:28px;height:22px;background:#c8dde6;border:1px solid #8f9aa0"></div>
<div class="t" style="left:262.50px;top:700.69px;font-size:11px;color:#000018;">0</div>
<div class="a" style="left:289px;top:696px;width:28px;height:22px;background:#c8dde6;border:1px solid #8f9aa0"></div>
<div class="t" style="left:292.50px;top:700.69px;font-size:11px;color:#000018;">0</div>
<div class="a" style="left:319px;top:696px;width:28px;height:22px;background:#c8dde6;border:1px solid #8f9aa0"></div>
<div class="t" style="left:322.50px;top:700.69px;font-size:11px;color:#000018;">0</div>
<div class="a" style="left:364px;top:542px;width:7px;height:171px;background:#1c1c1c;border-radius:3.5px 3.5px 0 0"></div>
<div class="a" style="left:368px;top:546px;width:2px;height:166px;background:#303030"></div>
<div class="a" style="left:364px;top:712px;width:8px;height:7px;border-radius:50%;background:radial-gradient(ellipse at 50% 40%,#ffffff 30%,#d0d0d0)"></div>
<div class="a" style="left:373px;top:712px;width:1px;height:8px;background:#5a5a5a"></div>
<div class="a" style="left:386px;top:542px;width:7px;height:171px;background:#1c1c1c;border-radius:3.5px 3.5px 0 0"></div>
<div class="a" style="left:390px;top:546px;width:2px;height:166px;background:#303030"></div>
<div class="a" style="left:386px;top:712px;width:8px;height:7px;border-radius:50%;background:radial-gradient(ellipse at 50% 40%,#ffffff 30%,#d0d0d0)"></div>
<div class="a" style="left:395px;top:712px;width:1px;height:8px;background:#5a5a5a"></div>
<div class="a" style="left:408px;top:542px;width:7px;height:171px;background:#1c1c1c;border-radius:3.5px 3.5px 0 0"></div>
<div class="a" style="left:412px;top:546px;width:2px;height:166px;background:#303030"></div>
<div class="a" style="left:408px;top:712px;width:8px;height:7px;border-radius:50%;background:radial-gradient(ellipse at 50% 40%,#ffffff 30%,#d0d0d0)"></div>
<div class="a" style="left:417px;top:712px;width:1px;height:8px;background:#5a5a5a"></div>
<div class="a" style="left:430px;top:542px;width:7px;height:171px;background:#1c1c1c;border-radius:3.5px 3.5px 0 0"></div>
<div class="a" style="left:434px;top:546px;width:2px;height:166px;background:#303030"></div>
<div class="a" style="left:430px;top:712px;width:8px;height:7px;border-radius:50%;background:radial-gradient(ellipse at 50% 40%,#ffffff 30%,#d0d0d0)"></div>
<div class="a" style="left:439px;top:712px;width:1px;height:8px;background:#5a5a5a"></div>
<div class="a" style="left:452px;top:542px;width:7px;height:171px;background:#1c1c1c;border-radius:3.5px 3.5px 0 0"></div>
<div class="a" style="left:456px;top:546px;width:2px;height:166px;background:#303030"></div>
<div class="a" style="left:452px;top:712px;width:8px;height:7px;border-radius:50%;background:radial-gradient(ellipse at 50% 40%,#ffffff 30%,#d0d0d0)"></div>
<div class="a" style="left:461px;top:712px;width:1px;height:8px;background:#5a5a5a"></div>
<div class="a" style="left:474px;top:542px;width:7px;height:171px;background:#1c1c1c;border-radius:3.5px 3.5px 0 0"></div>
<div class="a" style="left:478px;top:546px;width:2px;height:166px;background:#303030"></div>
<div class="a" style="left:474px;top:712px;width:8px;height:7px;border-radius:50%;background:radial-gradient(ellipse at 50% 40%,#ffffff 30%,#d0d0d0)"></div>
<div class="a" style="left:483px;top:712px;width:1px;height:8px;background:#5a5a5a"></div>
<div class="a" style="left:496px;top:542px;width:7px;height:171px;background:#1c1c1c;border-radius:3.5px 3.5px 0 0"></div>
<div class="a" style="left:500px;top:546px;width:2px;height:166px;background:#303030"></div>
<div class="a" style="left:496px;top:712px;width:8px;height:7px;border-radius:50%;background:radial-gradient(ellipse at 50% 40%,#ffffff 30%,#d0d0d0)"></div>
<div class="a" style="left:505px;top:712px;width:1px;height:8px;background:#5a5a5a"></div>
<div class="a" style="left:518px;top:542px;width:7px;height:171px;background:#1c1c1c;border-radius:3.5px 3.5px 0 0"></div>
<div class="a" style="left:522px;top:546px;width:2px;height:166px;background:#303030"></div>
<div class="a" style="left:518px;top:712px;width:8px;height:7px;border-radius:50%;background:radial-gradient(ellipse at 50% 40%,#ffffff 30%,#d0d0d0)"></div>
<div class="a" style="left:527px;top:712px;width:1px;height:8px;background:#5a5a5a"></div>
<div class="a" style="left:540px;top:542px;width:7px;height:171px;background:#1c1c1c;border-radius:3.5px 3.5px 0 0"></div>
<div class="a" style="left:544px;top:546px;width:2px;height:166px;background:#303030"></div>
<div class="a" style="left:540px;top:712px;width:8px;height:7px;border-radius:50%;background:radial-gradient(ellipse at 50% 40%,#ffffff 30%,#d0d0d0)"></div>
<div class="a" style="left:549px;top:712px;width:1px;height:8px;background:#5a5a5a"></div>
<div class="a" style="left:562px;top:542px;width:7px;height:171px;background:#1c1c1c;border-radius:3.5px 3.5px 0 0"></div>
<div class="a" style="left:566px;top:546px;width:2px;height:166px;background:#303030"></div>
<div class="a" style="left:562px;top:712px;width:8px;height:7px;border-radius:50%;background:radial-gradient(ellipse at 50% 40%,#ffffff 30%,#d0d0d0)"></div>
<div class="a" style="left:571px;top:712px;width:1px;height:8px;background:#5a5a5a"></div>
<div class="t" style="left:360.00px;top:520.44px;font-size:11px;color:#c4ccd4;">10%20%30%40%50%60%70%80%90%100%</div>
<div class="t" style="left:641.40px;top:524.17px;font-size:13.5px;color:#c0c0c0;">Response</div>
<div class="a" style="left:586px;top:544px;width:176px;height:176px;background:#f0f0f0;border:1px solid #fafafa;box-shadow:inset 0 0 0 1px #8c8c8c"></div>
<div class="a" style="left:590px;top:713px;width:167px;height:2px;background:#e21c1c"></div>
<div class="a" style="left:768px;top:524px;width:100px;height:198px;border:1px solid #565656"></div>
<div class="a" style="left:775px;top:518px;width:52px;height:12px;background:#2b2b2b"></div>
<div class="t" style="left:778.30px;top:516.37px;font-size:13.5px;color:#c4c4c4;">Service</div>
<div class="a" style="left:794px;top:535px;width:15px;height:15px;background:#000;border:1px solid #3c3c3c"></div>
<div class="t" style="left:813.00px;top:534.37px;font-size:13.5px;color:#c4c4c4;">Linked</div>
<div class="t" style="left:795.60px;top:553.80px;font-size:13px;color:#c4c4c4;">Q-Factor</div>
<div class="a" style="left:781px;top:577px;width:75px;height:7px;background:#1c1c1c;border-radius:3.5px"></div>
<div class="a" style="left:783px;top:581px;width:66px;height:2px;background:#333333"></div>
<div class="a" style="left:847px;top:576px;width:9px;height:9px;border-radius:50%;background:radial-gradient(circle at 45% 30%,#f4f4f4,#c8c8c8 50%,#8a8a8a)"></div>
<div class="a" style="left:786px;top:595px;width:1px;height:2px;background:linear-gradient(#555,#b0b0b0)"></div>
<div class="a" style="left:803px;top:595px;width:1px;height:2px;background:linear-gradient(#555,#b0b0b0)"></div>
<div class="a" style="left:811px;top:595px;width:1px;height:2px;background:linear-gradient(#555,#b0b0b0)"></div>
<div class="a" style="left:819px;top:595px;width:1px;height:2px;background:linear-gradient(#555,#b0b0b0)"></div>
<div class="a" style="left:827px;top:595px;width:1px;height:2px;background:linear-gradient(#555,#b0b0b0)"></div>
<div class="a" style="left:836px;top:595px;width:1px;height:2px;background:linear-gradient(#555,#b0b0b0)"></div>
<div class="a" style="left:844px;top:595px;width:1px;height:2px;background:linear-gradient(#555,#b0b0b0)"></div>
<div class="a" style="left:853px;top:595px;width:1px;height:2px;background:linear-gradient(#555,#b0b0b0)"></div>
<svg class="a" style="left:796px;top:593px" width="6" height="6"><path d="M0.5 5.5L5.5 5.5L5.5 0.5Z" fill="#c0c0c0"/></svg>
<div class="a" style="left:776px;top:606px;width:84px;height:33px;border:1px solid #565656"></div>
<div class="t" style="left:718.00px;width:200px;text-align:center;top:615.67px;font-size:13.5px;color:#bebebe;">Reset</div>
<div class="a" style="left:776px;top:641px;width:84px;height:33px;border:1px solid #565656"></div>
<div class="t" style="left:718.00px;width:200px;text-align:center;top:650.67px;font-size:13.5px;color:#bebebe;">Reset All</div>
<div class="a" style="left:776px;top:676px;width:84px;height:33px;border:1px solid #565656"></div>
<div class="t" style="left:718.00px;width:200px;text-align:center;top:685.67px;font-size:13.5px;color:#bebebe;">Scale 1:2</div>
<div class="a" style="left:13px;top:741px;width:64px;height:21px;border:1px solid #565656;background:#2a2a2a"></div>
<div class="t" style="left:27.20px;top:744.82px;font-size:12.5px;color:#e8e8e8;">Global</div>
<div class="a" style="left:142px;top:740px;width:64px;height:21px;border:1px solid #565656;background:#2a2a2a"></div>
<div class="t" style="left:161.50px;top:743.07px;font-size:13.5px;">Test</div>
<div class="a" style="left:205px;top:740px;width:65px;height:21px;border:1px solid #565656;background:#2a2a2a"></div>
<div class="t" style="left:228.00px;top:743.92px;font-size:12.5px;">Info</div>
<div class="a" style="left:76px;top:739px;width:68px;height:25px;background:linear-gradient(90deg,#393939,#414141);border:1px solid #4a4a4a"></div>
<div class="t" style="left:92.40px;top:745.72px;font-size:12.5px;color:#f0f0f0;">Profile</div>
</body></html>
